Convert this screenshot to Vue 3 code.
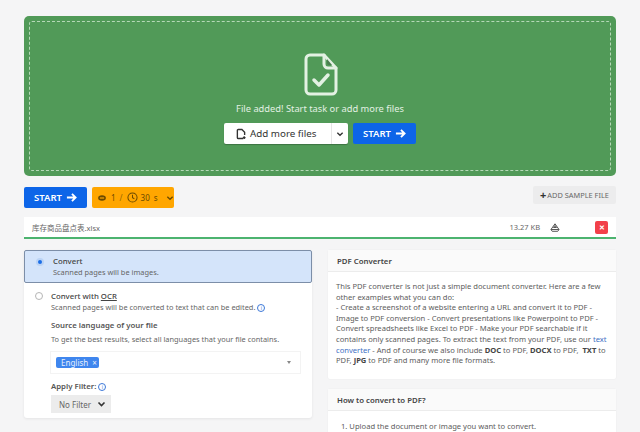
<script setup>
</script>

<template>
  <div class="page">
    <section class="drop">
      <div class="dash">
        <svg class="bigicon" width="34" height="43" viewBox="0 0 34 43" fill="none" stroke="#e3f1e3" stroke-width="3" stroke-linejoin="round" stroke-linecap="round">
          <path d="M6 2h14l12 13v22a4 4 0 0 1-4 4H6a4 4 0 0 1-4-4V6a4 4 0 0 1 4-4z" />
          <path d="M20 2v9a4 4 0 0 0 4 4h8" />
          <path d="M23 6v4a2 2 0 0 0 2 2h3z" fill="#4a7d50" stroke="none" />
          <path d="M10 27l5 5 9-10" stroke-width="3.500" />
        </svg>
        <p class="added">File added! Start task or add more files</p>
        <div class="actions">
          <div class="addmore">
            <span class="addmain">
              <svg width="10" height="12" viewBox="0 0 11 13" fill="none" stroke="#333" stroke-width="1.500"><path d="M8 11.500H2.500a1 1 0 0 1-1-1v-8a1 1 0 0 1 1-1h4l3 3v3" /><path d="M9 9v3M7.500 10.500h3" /></svg>
              Add more files
            </span>
            <span class="addcaret"><svg width="8" height="6" viewBox="0 0 9 6" fill="none" stroke="#333" stroke-width="1.500"><path d="M1.500 1.500l3 3 3-3" /></svg></span>
          </div>
          <button class="start">START <svg width="11" height="11" viewBox="0 0 12 11" fill="none" stroke="#fff" stroke-width="2"><path d="M1 5.500h9M6.500 1.500l4 4-4 4" /></svg></button>
        </div>
      </div>
    </section>

    <div class="toolbar">
      <button class="start">START <svg width="11" height="11" viewBox="0 0 12 11" fill="none" stroke="#fff" stroke-width="2"><path d="M1 5.500h9M6.500 1.500l4 4-4 4" /></svg></button>
      <div class="credits">
        <svg width="8" height="6" viewBox="0 0 9 7"><ellipse cx="4.500" cy="3.500" rx="4.500" ry="3.200" fill="#6b4a00" /><rect x="2" y="2.800" width="5" height="1.400" fill="#ffa600" /></svg>
        <span class="one">1</span><span class="slash">/</span>
        <svg width="11" height="11" viewBox="0 0 12 12" fill="none" stroke="#6b4a00" stroke-width="1.100"><circle cx="6" cy="6" r="5" /><path d="M6 3v3.200l2 1.200" /></svg>
        <span class="secs">30</span><span class="s">s</span>
        <svg class="cc" width="8" height="6" viewBox="0 0 9 6" fill="none" stroke="#6b4a00" stroke-width="1.500"><path d="M1.500 1.500l3 3 3-3" /></svg>
      </div>
      <button class="sample"><b>+</b>ADD SAMPLE FILE</button>
    </div>

    <div class="filerow">
      <span class="fname">库存商品盘点表.xlsx</span>
      <span class="fsize">13.27 KB</span>
      <svg class="drive" width="10" height="9" viewBox="0 0 10 9" fill="none" stroke="#555" stroke-width="1"><path d="M5 .8L1 6.500l1.200 1.800h5.600L9 6.500zM1 6.500h8M3.500 4.500L5 2.500l1.500 2z" /></svg>
      <span class="close">✕</span>
    </div>

    <div class="cols">
      <div class="left">
        <div class="opt sel">
          <span class="radio on"></span>
          <div>
            <div class="otitle">Convert</div>
            <div class="osub">Scanned pages will be images.</div>
          </div>
        </div>
        <div class="opt ocr">
          <span class="radio"></span>
          <div class="ocrbody">
            <div class="otitle">Convert with <u>OCR</u></div>
            <div class="osub">Scanned pages will be converted to text that can be edited. <i class="info">i</i></div>
            <div class="lbl src">Source language of your file</div>
            <div class="osub">To get the best results, select all languages that your file contains.</div>
            <div class="lang">
              <span class="tag">English <em>×</em></span>
              <span class="tri"></span>
            </div>
            <div class="lbl filt">Apply Filter: <i class="info">i</i></div>
            <div class="nofilter">No Filter <svg width="9" height="6" viewBox="0 0 9 6" fill="none" stroke="#333" stroke-width="1.600"><path d="M1.500 1.500l3 3 3-3" /></svg></div>
          </div>
        </div>
      </div>
      <div class="right">
        <div class="card">
          <div class="chead">PDF Converter</div>
          <div class="cbody">This PDF converter is not just a simple document converter. Here are a few other examples what you can do:<br>- Create a screenshot of a website entering a URL and convert it to PDF - Image to PDF conversion - Convert presentations like Powerpoint to PDF - Convert spreadsheets like Excel to PDF - Make your PDF searchable if it contains only scanned pages. To extract the text from your PDF, use our <a>text converter</a> - And of course we also include <b>DOC</b> to PDF, <b>DOCX</b> to PDF,&nbsp; <b>TXT</b> to PDF, <b>JPG</b> to PDF and many more file formats.</div>
        </div>
        <div class="card second">
          <div class="chead">How to convert to PDF?</div>
          <div class="cbody list">1. Upload the document or image you want to convert.</div>
        </div>
      </div>
    </div>
  </div>
</template>

<style>
html, body { margin: 0; background: #f5f5f6; overflow: hidden; }
</style>

<style scoped>
.page {
  width: 640px; height: 432px; box-sizing: border-box; overflow: hidden;
  padding: 16px 24px 0; background: #f5f5f6;
  font-family: "Noto Sans", "Noto Sans CJK SC", sans-serif; color: #4a4a4a;
}
.drop { height: 160px; box-sizing: border-box; background: #519a58; border-radius: 5px; padding: 5px; }
.dash {
  height: 100%; box-sizing: border-box; border: 1px dashed #b5d8b8; border-radius: 3px;
  display: flex; flex-direction: column; align-items: center; padding-top: 31px;
}
.bigicon { display: block; margin-left: 1px; }
.added { margin: 5px 0 0; font-size: 9.300px; line-height: 16px; color: #e3f1e3; }
.actions { display: flex; gap: 5px; margin-top: 6px; }
.addmore { display: flex; height: 21px; background: #fff; border-radius: 2px; box-shadow: 0 1px 1px rgba(0,0,0,.25); font-size: 9.800px; color: #333; }
.addmain { display: flex; align-items: center; gap: 4px; width: 107px; box-sizing: border-box; padding-left: 12px; }
.addcaret { width: 16px; display: flex; align-items: center; justify-content: center; border-left: 1px solid #e6e6e6; }
.start {
  display: flex; align-items: center; justify-content: center; gap: 4px;
  width: 63px; height: 21px; padding: 0; border: 0; border-radius: 2px; background: #0d65e8;
  color: #fff; font: 600 9.500px "Noto Sans", sans-serif;
}
.toolbar { display: flex; align-items: flex-start; margin-top: 11px; height: 21px; }
.credits {
  display: flex; align-items: center; width: 82px; height: 21px; box-sizing: border-box; padding-left: 6px;
  margin-left: 5px; background: #ffa600; border-radius: 2px; font-size: 8px; color: #6b4a00;
}
.one { margin-left: 5px; }
.slash { margin: 0 4px; opacity: .7; }
.secs { margin-left: 3px; }
.s { margin-left: 4px; }
.cc { margin-left: 8px; }
.sample {
  margin-left: auto; width: 83px; height: 18px; padding: 0; border: 0; background: #ececed; border-radius: 2px;
  font: 7.400px/18px "Noto Sans", sans-serif; color: #666; white-space: nowrap; margin-top: -1px;
}
.sample b { color: #333; font-size: 11px; line-height: 8px; margin-right: 1px; vertical-align: -1px; }
.filerow {
  display: flex; align-items: center; height: 22px; box-sizing: border-box; margin-top: 9px; padding: 0 8px; background: #fff;
  border-bottom: 2px solid #4cb36f; font-size: 7.500px; color: #666;
}
.fname { width: 470px; }
.fsize { width: 40px; text-align: right; }
.drive { margin-left: 10px; }
.close {
  margin-left: 35px; width: 13px; height: 13px; background: #f2404a; border-radius: 2px;
  color: #fff; font-size: 7px; font-weight: 700; line-height: 13px; text-align: center;
}
.cols { display: flex; gap: 16px; margin-top: 11px; align-items: flex-start; }
.left { width: 288px; background: #fff; border-radius: 3px; box-shadow: 0 1px 3px rgba(0,0,0,.07); }
.opt { display: flex; }
.sel {
  height: 33px; box-sizing: border-box; background: #d4e4fa; border: 1px solid #7c8ea8; border-radius: 2px; padding: 5px 0 0 11px; gap: 9px;
}
.radio { flex: none; width: 6px; height: 6px; border-radius: 50%; background: #fff; border: 1px solid #b5b5b5; margin-top: 2px; }
.radio.on { background: #1b6ee6; border: 2px solid #bcd4f5; width: 4px; height: 4px; }
.otitle { font-size: 7.800px; line-height: 11px; color: #444; font-weight: 500; }
.osub { font-size: 7.400px; line-height: 11px; color: #666; white-space: nowrap; }
.ocr { padding: 8px 0 4px 11px; gap: 8px; height: 135px; box-sizing: border-box; }
.ocr .radio { margin-top: 1px; }
.info {
  display: inline-block; width: 6px; height: 6px; border: 1px solid #3d78d8; border-radius: 50%;
  color: #3d78d8; font: normal 5px/6px "Noto Sans", sans-serif; text-align: center; vertical-align: 0;
}
.ocrbody { flex: 1; padding-right: 12px; }
.lbl { font-size: 7.800px; line-height: 11px; font-weight: 600; color: #555; }
.src { margin-top: 7px; margin-bottom: 3px; }
.lang { height: 21px; margin-top: 7px; display: flex; align-items: center; justify-content: space-between; padding: 0 9px 0 5px; background: #fff; box-shadow: 0 0 0 1px #f3f3f3; }
.tag { background: #3f86ee; color: #e8f0fd; font-size: 8px; line-height: 11px; padding: 0 4px 0 5px; border-radius: 2px; height: 11px; width: 43px; box-sizing: border-box; white-space: nowrap; }
.tag em { font-style: normal; margin-left: 2px; font-size: 8px; }
.tri { width: 0; height: 0; border-left: 2.500px solid transparent; border-right: 2.500px solid transparent; border-top: 3px solid #888; }
.filt { margin-top: 8px; }
.nofilter {
  width: 60px; height: 18px; margin-top: 3px; box-sizing: border-box; padding: 0 5px 0 8px; background: #ececec;
  display: flex; align-items: center; justify-content: space-between; font-size: 8px; color: #666;
}
.right { width: 288px; }
.card { background: #fff; box-shadow: 0 0 2px rgba(0,0,0,.06); border-radius: 2px; }
.chead { height: 22px; line-height: 22px; padding-left: 9px; font-size: 7.800px; font-weight: 600; color: #444; background: #fafafa; border-bottom: 1px solid #ececec; box-sizing: border-box; }
.cbody { padding: 9px 8px 13px; font-size: 7.600px; line-height: 10.600px; color: #5c5c5c; }
.cbody a { color: #3d6fc4; }
.cbody b { font-weight: 700; color: #444; }
.second { margin-top: 10px; height: 60px; }
.list { padding: 10px 13px; }
</style>
